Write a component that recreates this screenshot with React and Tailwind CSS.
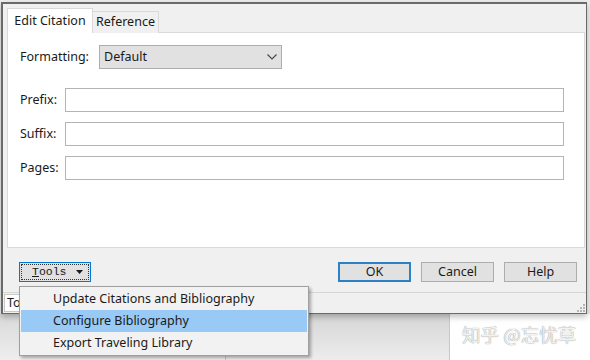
import { useState } from "react";

const menuItems = [
  "Update Citations and Bibliography",
  "Configure Bibliography",
  "Export Traveling Library",
];

function FieldRow({ label }) {
  return (
    <div className="flex h-[24px] items-center">
      <span className="w-[45px] text-[12.5px] text-[#1a1a1a]">{label}</span>
      <div className="h-[24px] flex-1 border border-[#b4b4b4] bg-white" />
    </div>
  );
}

function DialogButton({ children, primary }) {
  return (
    <button
      type="button"
      className={`flex h-[20px] w-[73px] items-center justify-center bg-[#e1e1e1] text-[12.5px] text-[#1a1a1a] ${
        primary
          ? "border-2 border-[#2f7fc6]"
          : "border border-[#adadad]"
      }`}
    >
      {children}
    </button>
  );
}

function Grip() {
  return (
    <svg width="8" height="8" viewBox="0 0 8 8" className="block">
      <rect x="6" y="0" width="2" height="2" fill="#b5b5b5" />
      <rect x="3" y="3" width="2" height="2" fill="#b5b5b5" />
      <rect x="6" y="3" width="2" height="2" fill="#b5b5b5" />
      <rect x="0" y="6" width="2" height="2" fill="#b5b5b5" />
      <rect x="3" y="6" width="2" height="2" fill="#b5b5b5" />
      <rect x="6" y="6" width="2" height="2" fill="#b5b5b5" />
    </svg>
  );
}

export default function App() {
  const [active] = useState(1);

  return (
    <div className="relative flex h-[360px] w-[590px] flex-col overflow-hidden bg-[#ececec] font-['Noto_Sans',sans-serif]">
      {/* dialog */}
      <div className="relative z-10 ml-px mt-[2px] flex h-[312px] w-[586px] flex-col border-b border-l-2 border-r border-t-2 border-[#6a6a6a] bg-[#f0f0f0] shadow-[0_3px_6px_rgba(0,0,0,0.25)]">
        <div className="pl-[4px] pt-[4px]">
          <div className="flex h-[25px] items-end">
            <div className="relative z-10 flex h-[25px] w-[86px] items-center justify-center border-l border-r border-t border-[#d9d9d9] bg-white text-[12.5px] text-[#1a1a1a]">
              Edit Citation
            </div>
            <div className="flex h-[22px] w-[66px] items-center justify-center border-r border-t border-[#d9d9d9] bg-[#f0f0f0] text-[12.5px] text-[#1a1a1a]">
              Reference
            </div>
          </div>
          <div className="-mt-px h-[216px] w-[578px] border border-[#d9d9d9] bg-white pl-[12px] pr-[20px] pt-[12px]">
            <div className="flex h-[24px] items-center">
              <span className="w-[79px] text-[12.5px] text-[#1a1a1a]">Formatting:</span>
              <div className="flex h-[24px] w-[183px] items-center justify-between border border-[#adadad] bg-[#e1e1e1] pl-[4px] pr-[4px]">
                <span className="text-[12.5px] text-[#1a1a1a]">Default</span>
                <svg width="10" height="6" viewBox="0 0 10 6" className="block">
                  <polyline points="0.5,0.5 5,5 9.5,0.5" fill="none" stroke="#444" strokeWidth="1.1" />
                </svg>
              </div>
            </div>
            <div className="mt-[19px] flex flex-col gap-[10px]">
              <FieldRow label="Prefix:" />
              <FieldRow label="Suffix:" />
              <FieldRow label="Pages:" />
            </div>
          </div>
        </div>

        <div className="mt-[14px] flex items-center pl-[16px] pr-[9px]">
          <button
            type="button"
            className="h-[20px] w-[72px] border border-[#0078d7] bg-[#e1e1e1] p-px"
          >
            <div className="flex h-full items-center border border-dotted border-[#333] pl-[10px] pr-[5px] font-['Liberation_Mono',monospace] text-[11.5px] text-[#1a1a1a]">
              <span>
                <span className="underline">T</span>ools
              </span>
              <svg width="7" height="4" viewBox="0 0 7 4" className="ml-auto block">
                <polygon points="0,0 7,0 3.5,4" fill="#1a1a1a" />
              </svg>
            </div>
          </button>
          <div className="ml-auto flex gap-[10px]">
            <DialogButton primary>OK</DialogButton>
            <DialogButton>Cancel</DialogButton>
            <DialogButton>Help</DialogButton>
          </div>
        </div>

        <div className="mt-[10px] h-px bg-[#d5d5d5]" />
        <div className="flex flex-1 items-center pl-[1px]">
          <div className="flex h-[18px] w-[60px] items-center border border-[#c8c8c8] bg-white pl-[2px] text-[12.5px] text-[#1a1a1a]">
            Total
          </div>
          <div className="ml-auto self-end pb-[1px] pr-[1px]">
            <Grip />
          </div>
        </div>
      </div>

      {/* behind the dialog */}
      <div className="flex flex-1">
        <div className="w-[226px] border-r border-[#c8c8c8] bg-gradient-to-b from-[#d9d9d9] to-[#eeeeee]" />
        <div className="w-[224px] border-r border-[#c8c8c8] bg-gradient-to-b from-[#d6d6d6] to-[#ececec]" />
        <div className="flex flex-1 items-start bg-white pl-[12px] pt-[9px]">
          <span className="font-['Noto_Sans_CJK_SC',sans-serif] text-[18.5px] leading-[22px] text-[#f2f2f2] [text-shadow:0_0_1px_#707070]">
            知乎 @忘忧草
          </span>
        </div>
      </div>

      {/* tools menu */}
      <div className="absolute left-[19px] top-[286px] z-20 w-[290px] border border-[#a0a0a0] bg-[#f2f2f2] px-px py-px shadow-[2px_2px_3px_rgba(0,0,0,0.3)]">
        {menuItems.map((item, i) => (
          <div
            key={item}
            className={`flex h-[22px] items-center pl-[32px] text-[12.5px] text-[#1a1a1a] ${
              i === active ? "bg-[#99c9f5]" : ""
            }`}
          >
            {item}
          </div>
        ))}
      </div>
    </div>
  );
}
